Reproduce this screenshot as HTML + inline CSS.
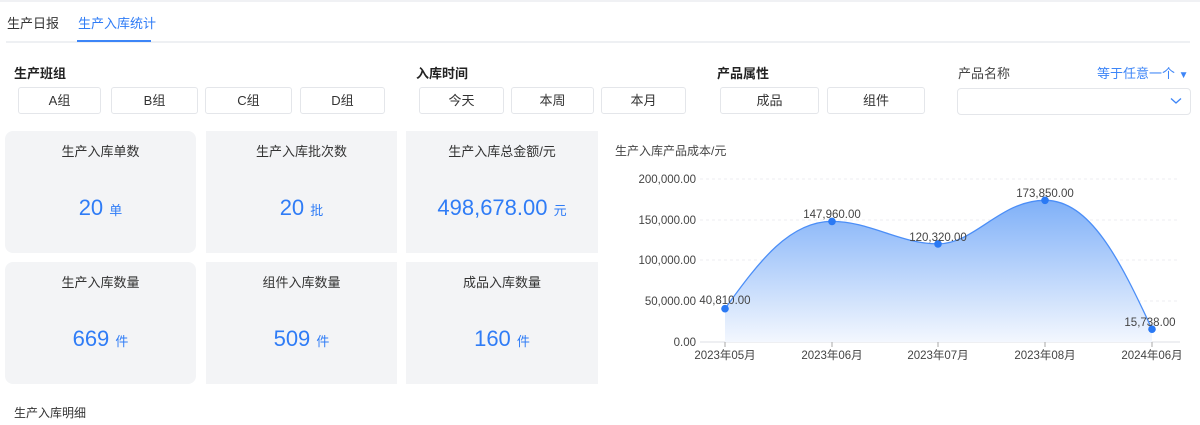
<!DOCTYPE html>
<html><head><meta charset="utf-8"><style>
*{margin:0;padding:0;box-sizing:border-box}
body{width:1200px;height:425px;background:#fff;position:relative;overflow:hidden;font-family:"Liberation Sans","Noto Sans CJK SC",sans-serif;color:#333}
.a{position:absolute}
.btn{position:absolute;top:87px;height:27px;border:1px solid #e4e6ea;border-radius:3px;font-size:13px;line-height:25px;text-align:center;color:#333;background:#fff}
.lbl{position:absolute;top:63px;font-size:13px;font-weight:bold;color:#222}
.card{position:absolute;background:#f3f4f6;text-align:center}
.card .t{position:absolute;top:10px;left:0;right:0;font-size:13px;color:#333}
.card .v{position:absolute;top:64px;left:0;right:0;font-size:22px;color:#2f7cf6}
.card .v small{font-size:13px}
</style></head><body>
<div class="a" style="left:0;top:0;width:1200px;height:2px;background:#f0f1f4"></div>
<div class="a" style="left:7px;top:13px;font-size:13px;color:#333">生产日报</div>
<div class="a" style="left:78px;top:13px;font-size:13px;color:#2f7cf6">生产入库统计</div>
<div class="a" style="left:6px;top:41px;width:1184px;height:2px;background:#eef0f3"></div>
<div class="a" style="left:77px;top:40px;width:74px;height:2px;background:#3d85f7"></div>

<div class="lbl" style="left:14px">生产班组</div>
<div class="lbl" style="left:416px">入库时间</div>
<div class="lbl" style="left:717px">产品属性</div>
<div class="a" style="left:958px;top:63px;font-size:13px;color:#444">产品名称</div>
<div class="a" style="left:1097px;top:63px;font-size:13px;color:#3d85f7">等于任意一个 <span style="font-size:10px">▼</span></div>

<div class="btn" style="left:18px;width:83px">A组</div>
<div class="btn" style="left:111px;width:87px">B组</div>
<div class="btn" style="left:205px;width:87px">C组</div>
<div class="btn" style="left:300px;width:85px">D组</div>
<div class="btn" style="left:419px;width:85px">今天</div>
<div class="btn" style="left:511px;width:83px">本周</div>
<div class="btn" style="left:601px;width:85px">本月</div>
<div class="btn" style="left:720px;width:99px">成品</div>
<div class="btn" style="left:827px;width:98px">组件</div>
<div class="btn" style="left:957px;width:234px;top:88px;height:27px;border-radius:4px"></div>
<svg class="a" style="left:1170px;top:97px" width="12" height="8"><path d="M1 1.5L6 6L11 1.5" stroke="#3d85f7" stroke-width="1.3" fill="none"/></svg>

<div class="card" style="left:5px;top:131px;width:191px;height:122px;border-radius:8px"><div class="t">生产入库单数</div><div class="v">20 <small>单</small></div></div>
<div class="card" style="left:206px;top:131px;width:191px;height:122px"><div class="t">生产入库批次数</div><div class="v">20 <small>批</small></div></div>
<div class="card" style="left:406px;top:131px;width:192px;height:122px"><div class="t">生产入库总金额/元</div><div class="v">498,678.00 <small>元</small></div></div>
<div class="card" style="left:5px;top:262px;width:191px;height:122px;border-radius:8px"><div class="t">生产入库数量</div><div class="v">669 <small>件</small></div></div>
<div class="card" style="left:206px;top:262px;width:191px;height:122px"><div class="t">组件入库数量</div><div class="v">509 <small>件</small></div></div>
<div class="card" style="left:406px;top:262px;width:192px;height:122px"><div class="t">成品入库数量</div><div class="v">160 <small>件</small></div></div>

<div class="a" style="left:14px;top:404px;font-size:12px;color:#333">生产入库明细</div>
<div class="a" style="left:615px;top:142px;font-size:12px;color:#444">生产入库产品成本/元</div>

<svg class="a" style="left:0;top:0" width="1200" height="425" font-family="Liberation Sans,sans-serif" font-size="11.5" fill="#444">
<defs><linearGradient id="g" x1="0" y1="0" x2="0" y2="1"><stop offset="0" stop-color="#7fb0f8"/><stop offset="1" stop-color="#f3f7fe"/></linearGradient></defs>
<g stroke="#eceef2" stroke-dasharray="3 3"><line x1="700" y1="179" x2="1180" y2="179"/><line x1="700" y1="220" x2="1180" y2="220"/><line x1="700" y1="260" x2="1180" y2="260"/><line x1="700" y1="301" x2="1180" y2="301"/></g>
<line x1="700" y1="342" x2="1180" y2="342" stroke="#dcdfe6"/>
<g stroke="#aaa"><line x1="725" y1="342" x2="725" y2="347"/><line x1="832" y1="342" x2="832" y2="347"/><line x1="938" y1="342" x2="938" y2="347"/><line x1="1045" y1="342" x2="1045" y2="347"/><line x1="1152" y1="342" x2="1152" y2="347"/></g>
<path d="M725 308.7C760 260 790 221.4 832 221.4C870 221.4 900 243.9 938 243.9C975 243.9 1000 200.3 1045 200.3C1090 200.3 1120 260 1152 329.2L1152 342L725 342Z" fill="url(#g)"/>
<path d="M725 308.7C760 260 790 221.4 832 221.4C870 221.4 900 243.9 938 243.9C975 243.9 1000 200.3 1045 200.3C1090 200.3 1120 260 1152 329.2" fill="none" stroke="#4b8ef7" stroke-width="1.3"/>
<g fill="#2a79f4"><circle cx="725" cy="308.7" r="3.8"/><circle cx="832" cy="221.4" r="3.8"/><circle cx="938" cy="243.9" r="3.8"/><circle cx="1045" cy="200.3" r="3.8"/><circle cx="1152" cy="329.2" r="3.8"/></g>
<g text-anchor="end"><text x="696" y="183">200,000.00</text><text x="696" y="224">150,000.00</text><text x="696" y="264">100,000.00</text><text x="696" y="305">50,000.00</text><text x="696" y="346">0.00</text></g>
<g text-anchor="middle"><text x="725" y="359">2023年05月</text><text x="832" y="359">2023年06月</text><text x="938" y="359">2023年07月</text><text x="1045" y="359">2023年08月</text><text x="1152" y="359">2024年06月</text>
<text x="725" y="304">40,810.00</text><text x="832" y="218">147,960.00</text><text x="938" y="241">120,320.00</text><text x="1045" y="197">173,850.00</text><text x="1150" y="326">15,738.00</text></g>
</svg>
</body></html>
